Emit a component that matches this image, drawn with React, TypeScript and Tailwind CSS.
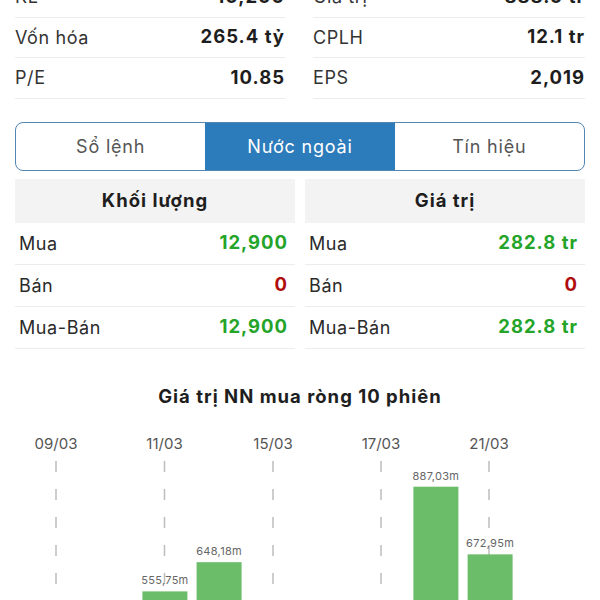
import React from "react";

const topLeft = [
  ["KL", "10,200"],
  ["Vốn hóa", "265.4 tỷ"],
  ["P/E", "10.85"],
];
const topRight = [
  ["Giá trị", "888.0 tr"],
  ["CPLH", "12.1 tr"],
  ["EPS", "2,019"],
];

const volRows = [
  ["Mua", "12,900", "g"],
  ["Bán", "0", "r"],
  ["Mua-Bán", "12,900", "g"],
];
const valRows = [
  ["Mua", "282.8 tr", "g"],
  ["Bán", "0", "r"],
  ["Mua-Bán", "282.8 tr", "g"],
];

const bars: { i: number; v: number; label: string }[] = [
  { i: 2, v: 555.75, label: "555,75m" },
  { i: 3, v: 648.18, label: "648,18m" },
  { i: 7, v: 887.03, label: "887,03m" },
  { i: 8, v: 672.95, label: "672,95m" },
];
const axis = [
  { x: 56, t: "09/03" },
  { x: 164.5, t: "11/03" },
  { x: 273, t: "15/03" },
  { x: 381, t: "17/03" },
  { x: 489, t: "21/03" },
];

function InfoCol({ rows }: { rows: string[][] }) {
  return (
    <div className="flex flex-col">
      {rows.map(([l, v]) => (
        <div
          key={l}
          className="h-[40.5px] flex items-center justify-between border-b border-[#ececec]"
        >
          <span className="text-[18px] tracking-[0.6px] text-[#333]">{l}</span>
          <span className="text-[18.5px] tracking-[1px] font-bold text-[#1e1e1e]">{v}</span>
        </div>
      ))}
    </div>
  );
}

function Table({ title, rows }: { title: string; rows: string[][] }) {
  return (
    <div className="flex flex-col">
      <div className="h-[44px] bg-[#f3f3f3] flex items-center justify-center text-[18.5px] tracking-[1px] font-bold text-[#1e1e1e]">
        {title}
      </div>
      {rows.map(([l, v, c]) => (
        <div
          key={l}
          className="h-[42px] flex items-center justify-between pl-[4px] pr-[7px] border-b border-[#ececec]"
        >
          <span className="text-[18px] tracking-[0.6px] text-[#2a2a2a]">{l}</span>
          <span
            className={
              c === "g"
                ? "text-[18.5px] tracking-[1px] font-bold text-[#25a42a]"
                : "text-[18.5px] tracking-[1px] font-bold text-[#b00d0d]"
            }
          >
            {v}
          </span>
        </div>
      ))}
    </div>
  );
}

export default function App() {
  const base = 769;
  const k = 0.316;
  return (
    <div className="w-[600px] h-[600px] overflow-hidden bg-white font-['Inter',sans-serif]">
      <div className="-mt-[23px] px-[15px] grid grid-cols-[270px_272px] gap-x-[28px]">
        <InfoCol rows={topLeft} />
        <InfoCol rows={topRight} />
      </div>

      <div className="mt-[23px] mx-[15px] h-[49px] grid grid-cols-3 rounded-[8px] border-[1.5px] border-[#5286b3] overflow-hidden">
        <div className="flex items-center justify-center text-[18px] tracking-[0.8px] text-[#555]">Sổ lệnh</div>
        <div className="flex items-center justify-center text-[18px] tracking-[0.8px] text-white bg-[#2c7bba]">Nước ngoài</div>
        <div className="flex items-center justify-center text-[18px] tracking-[0.8px] text-[#555]">Tín hiệu</div>
      </div>

      <div className="mt-[8px] px-[15px] grid grid-cols-2 gap-x-[10px]">
        <Table title="Khối lượng" rows={volRows} />
        <Table title="Giá trị" rows={valRows} />
      </div>

      <div className="mt-[35px] text-center text-[18.5px] tracking-[1px] font-bold text-[#1e1e1e] leading-[24px]">
        Giá trị NN mua ròng 10 phiên
      </div>

      <svg width="600" height="200" viewBox="0 410 600 200" className="block">
        {axis.map((a) => (
          <g key={a.t}>
            <text
              x={a.x}
              y={451}
              textAnchor="middle"
              fontSize="15"
              fill="#555"
              fontFamily="Inter, sans-serif"
            >
              {a.t}
            </text>
            <line
              x1={a.x}
              y1={463}
              x2={a.x}
              y2={620}
              stroke="#bdbdbd"
              strokeWidth="1.5"
              strokeDasharray="11 17"
            />
          </g>
        ))}
        {bars.map((b) => {
          const x = 34 + 54.2 * b.i;
          const top = base - b.v * k;
          return (
            <g key={b.i}>
              <rect x={x} y={top} width={45} height={base - top} fill="#6cbd6a" />
              <text
                x={x + 22.5}
                y={top - 7}
                textAnchor="middle"
                fontSize="11"
                letterSpacing="0.3"
                fill="#666"
                fontFamily="Inter, sans-serif"
              >
                {b.label}
              </text>
            </g>
          );
        })}
      </svg>
    </div>
  );
}
